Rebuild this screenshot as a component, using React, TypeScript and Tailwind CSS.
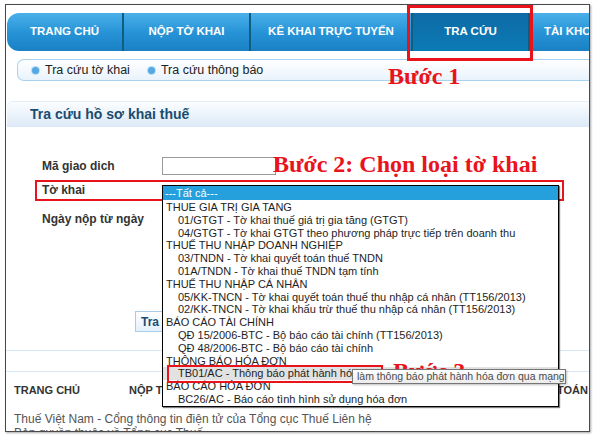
const navTabs = [
  { label: "TRANG CHỦ", w: "w-[115px]", active: false },
  { label: "NỘP TỜ KHAI", w: "w-[127px]", active: false },
  { label: "KÊ KHAI TRỰC TUYẾN", w: "w-[162px]", active: false },
  { label: "TRA CỨU", w: "w-[117px]", active: true },
  { label: "TÀI KHOẢN", w: "w-[90px]", active: false },
];

const options: { text: string; group?: boolean; hover?: boolean }[] = [
  { text: "THUE GIA TRỊ GIA TANG", group: true },
  { text: "01/GTGT - Tờ khai thuế giá trị gia tăng (GTGT)" },
  { text: "04/GTGT - Tờ khai GTGT theo phương pháp trực tiếp trên doanh thu" },
  { text: "THUẾ THU NHẬP DOANH NGHIỆP", group: true },
  { text: "03/TNDN - Tờ khai quyết toán thuế TNDN" },
  { text: "01A/TNDN - Tờ khai thuế TNDN tạm tính" },
  { text: "THUẾ THU NHẬP CÁ NHÂN", group: true },
  { text: "05/KK-TNCN - Tờ khai quyết toán thuế thu nhập cá nhân (TT156/2013)" },
  { text: "02/KK-TNCN - Tờ khai khấu trừ thuế thu nhập cá nhân (TT156/2013)" },
  { text: "BÁO CÁO TÀI CHÍNH", group: true },
  { text: "QĐ 15/2006-BTC - Bộ báo cáo tài chính (TT156/2013)" },
  { text: "QĐ 48/2006-BTC - Bộ báo cáo tài chính" },
  { text: "THÔNG BÁO HÓA ĐƠN", group: true },
  { text: "TB01/AC - Thông báo phát hành hóa đơn qua mạng", hover: true },
  { text: "BÁO CÁO HÓA ĐƠN", group: true },
  { text: "BC26/AC - Báo cáo tình hình sử dụng hóa đơn" },
];

const sans = "font-['Liberation_Sans',Arial,sans-serif]";
const serif = "font-['Liberation_Serif','Times_New_Roman',serif]";

export default function App() {
  return (
    <div className={`w-[603px] h-[441px] bg-white overflow-hidden pl-[5px] pt-[4px] ${sans}`}>
      <div className="relative w-[585px] h-[428px] border border-[#4a4a4a] shadow-[1px_1px_2px_rgba(0,0,0,0.35)] overflow-hidden bg-white">
        <div className="h-[8px]" />

        {/* top navigation */}
        <div className="ml-[1px] h-[38px] flex rounded-l-[12px] overflow-hidden bg-gradient-to-b from-[#49b0ea] via-[#2794d7] to-[#1a80c4]">
          {navTabs.map((t, i) => (
            <div
              key={t.label}
              className={`${t.w} shrink-0 flex items-center justify-center text-[11.5px] font-bold text-white ${
                i > 0 ? "border-l-2 border-[#0f5e80]" : ""
              } ${t.active ? "bg-gradient-to-b from-[#0e6aa6] to-[#0b7bb6]" : ""} ${
                i === navTabs.length - 1 ? "justify-start pl-[14px]" : ""
              }`}
            >
              <span className="whitespace-nowrap">{t.label}</span>
            </div>
          ))}
        </div>

        {/* sub navigation */}
        <div className="ml-[11px] mt-[8px] h-[22px] flex items-center gap-[10px] pl-[14px] rounded-l-[7px] border border-r-0 border-[#a7d2f0] bg-gradient-to-b from-white to-[#e9f3fc] text-[12.5px] text-[#222]">
          <div className="flex items-center gap-[6px]">
            <span className="w-[7px] h-[7px] rounded-full bg-[#55a8e4] ring-1 ring-[#b8dcf5]" />
            <span>Tra cứu tờ khai</span>
          </div>
          <div className="flex items-center gap-[6px] ml-[8px]">
            <span className="w-[7px] h-[7px] rounded-full bg-[#55a8e4] ring-1 ring-[#b8dcf5]" />
            <span>Tra cứu thông báo</span>
          </div>
        </div>

        {/* section header */}
        <div className="ml-[1px] mt-[20px] h-[26px] flex items-center pl-[23px] rounded-tl-[6px] border-t border-[#e2edf8] bg-gradient-to-b from-[#fbfdff] to-[#dce9f6] text-[14px] font-bold text-[#1a4c70]">
          Tra cứu hồ sơ khai thuế
        </div>

        {/* form */}
        <div className="text-[12px] font-bold text-[#333]">
          <div className="mt-[30px] h-[18px] flex items-center">
            <span className="w-[156px] pl-[36px]">Mã giao dich</span>
            <div className="w-[114px] h-[18px] border border-[#9a9a9a] bg-white" />
          </div>
          <div className="mt-[8px] h-[14px] flex items-center">
            <span className="w-[156px] pl-[36px]">Tờ khai</span>
          </div>
          <div className="mt-[14px] h-[16px] flex items-center">
            <span className="w-[156px] pl-[36px]">Ngày nộp từ ngày</span>
          </div>
          <div className="mt-[84px] pl-[129px]">
            <div className="w-[70px] h-[21px] flex items-center pl-[5px] border border-[#a8cdea] bg-gradient-to-b from-white to-[#e4f0fb] text-[12px] text-[#1a4c70]">
              Tra cứu
            </div>
          </div>
        </div>

        <div className="mt-[18px] border-t border-[#d6e7f6]" />
        <div className="mt-[20px] border-t border-[#d6e7f6]" />

        {/* footer */}
        <div className="mt-[11px] h-[14px] flex items-center text-[11px] font-bold text-[#333] pl-[8px]">
          <span className="w-[115px]">TRANG CHỦ</span>
          <span>NỘP TỜ KHAI</span>
          <span className="ml-auto pr-[1px]">KẾ TOÁN</span>
        </div>
        <div className="mt-[15px] h-[14px] flex items-center pl-[8px] text-[12px] text-[#555]">
          Thuế Việt Nam - Cổng thông tin điện tử của Tổng cục Thuế Liên hệ
        </div>
        <div className="h-[14px] flex items-center pl-[8px] text-[12px] text-[#555]">
          Bản quyền thuộc về Tổng cục Thuế
        </div>

        {/* annotations */}
        <div className="absolute left-[401px] top-0 w-[126px] h-[56px] border-[3px] border-[#e8131b]" />
        <div className={`absolute left-[382px] top-[59px] text-[24px] leading-[24px] font-bold text-[#e8131b] ${serif}`}>
          Bước 1
        </div>
        <div className={`absolute left-[267px] top-[147px] text-[24px] leading-[24px] font-bold text-[#e8131b] ${serif}`}>
          Bước 2: Chọn loại tờ khai
        </div>
        <div className="absolute left-[29px] top-[175px] w-[529px] h-[21px] border-2 border-[#e8131b]" />

        {/* open select list */}
        <div className="absolute left-[156px] top-[180px] w-[397px] h-[222px] border border-black bg-white shadow-[1px_1px_1px_rgba(0,0,0,0.5)] text-[11px] text-[#1e1e1e]">
          <div className="h-[14px] flex items-center pl-[2px] bg-[#26a0dc] text-white">---Tất cả---</div>
          <div className="pt-[1px]">
            {options.map((o) => (
              <div
                key={o.text}
                className={`h-[12.8px] leading-[12.8px] whitespace-nowrap overflow-hidden ${
                  o.group ? "pl-[3px]" : "pl-[15px]"
                } ${o.hover ? "bg-[#e2e2e2]" : ""}`}
              >
                {o.text}
              </div>
            ))}
          </div>
        </div>

        <div className={`absolute left-[387px] top-[354px] text-[24px] leading-[24px] font-bold text-[#e8131b] ${serif}`}>
          Bước 3
        </div>
        <div className="absolute left-[161px] top-[360px] w-[216px] h-[18px] border-2 border-[#e8131b]" />

        {/* tooltip */}
        <div className="absolute left-[346px] top-[364px] h-[15px] w-[214px] flex items-center pl-[4px] border border-[#767676] bg-gradient-to-b from-white to-[#ececec] shadow-[1px_1px_2px_rgba(0,0,0,0.25)] text-[10.5px] text-[#4a4a4a] whitespace-nowrap overflow-hidden">
          làm thông báo phát hành hóa đơn qua mạng
        </div>
      </div>
    </div>
  );
}
